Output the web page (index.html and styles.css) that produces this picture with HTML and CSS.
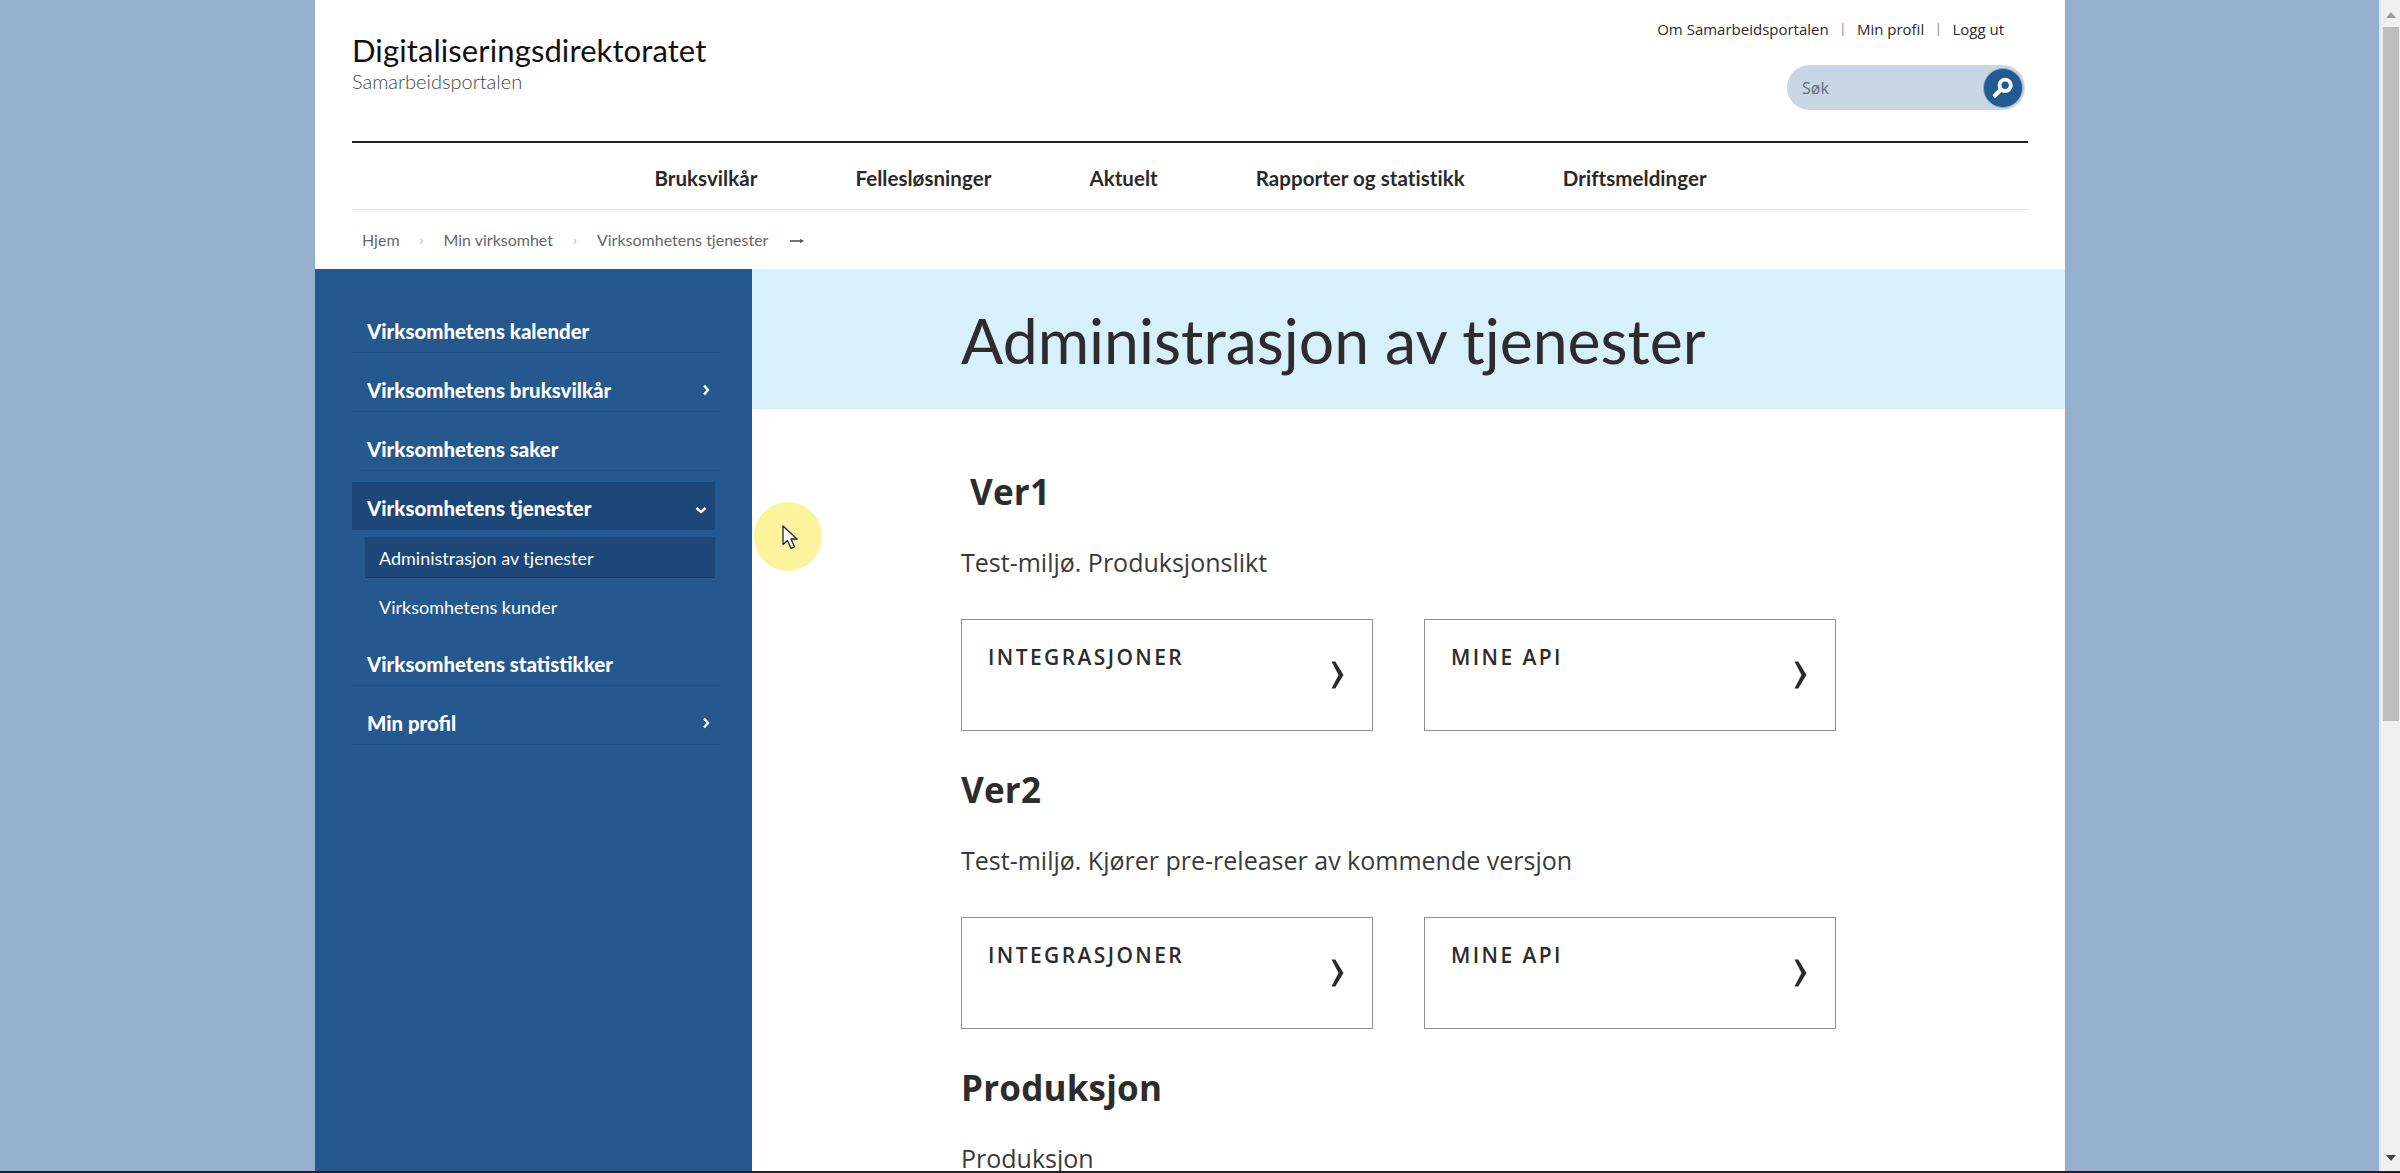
FILE: index.html
```html
<!DOCTYPE html>
<html lang="no">
<head>
<meta charset="utf-8">
<title>Administrasjon av tjenester</title>
<link rel="stylesheet" href="styles.css">
</head>
<body>
<div class="viewport">
  <div class="stage">
    <div class="page">
      <header class="header">
        <div class="header-top">
          <div class="logo">
            <div class="logo-title">Digitaliseringsdirektoratet</div>
            <div class="logo-sub">Samarbeidsportalen</div>
          </div>
          <div class="tools">
            <nav class="toplinks">
              <a>Om Samarbeidsportalen</a><span class="sep">|</span><a>Min profil</a><span class="sep">|</span><a>Logg ut</a>
            </nav>
            <div class="search">
              <span class="search-label">Søk</span>
              <span class="search-btn">
                <svg class="search-icon" viewBox="0 0 24 24"><circle cx="14" cy="9.5" r="5.2" fill="none" stroke="#fff" stroke-width="3.6"/><path d="M10 13.5 4.5 19" fill="none" stroke="#fff" stroke-width="4" stroke-linecap="round"/></svg>
              </span>
            </div>
          </div>
        </div>
        <nav class="mainnav">
          <a>Bruksvilkår</a>
          <a>Fellesløsninger</a>
          <a>Aktuelt</a>
          <a>Rapporter og statistikk</a>
          <a>Driftsmeldinger</a>
        </nav>
        <nav class="crumbs">
          <a>Hjem</a>
          <span class="crumb-sep">›</span>
          <a>Min virksomhet</a>
          <span class="crumb-sep">›</span>
          <a>Virksomhetens tjenester</a>
          <svg class="crumb-arrow" viewBox="0 0 14 6"><path d="M0 3h11" stroke="#555" stroke-width="1.6"/><path d="M10 .8 14 3l-4 2.2z" fill="#555"/></svg>
        </nav>
      </header>
      <div class="columns">
        <aside class="sidebar">
          <ul class="menu">
            <li class="menu-item"><a class="menu-link">Virksomhetens kalender</a></li>
            <li class="menu-item"><a class="menu-link">Virksomhetens bruksvilkår<svg class="chev" viewBox="0 0 8 12"><path d="M2 1.5 6 6l-4 4.5" fill="none" stroke="#fff" stroke-width="2.4"/></svg></a></li>
            <li class="menu-item"><a class="menu-link menu-link-short">Virksomhetens saker</a></li>
            <li class="menu-item"><a class="menu-link menu-link-active">Virksomhetens tjenester<svg class="chev-down" viewBox="0 0 12 8"><path d="M1.5 2 6 6l4.5-4" fill="none" stroke="#fff" stroke-width="2.4"/></svg></a>
              <ul class="submenu">
                <li><a class="sub-link sub-link-active">Administrasjon av tjenester</a></li>
                <li><a class="sub-link">Virksomhetens kunder</a></li>
              </ul>
            </li>
            <li class="menu-item"><a class="menu-link">Virksomhetens statistikker</a></li>
            <li class="menu-item"><a class="menu-link">Min profil<svg class="chev" viewBox="0 0 8 12"><path d="M2 1.5 6 6l-4 4.5" fill="none" stroke="#fff" stroke-width="2.4"/></svg></a></li>
          </ul>
        </aside>
        <main class="main">
          <div class="hero"><h1 class="hero-title">Administrasjon av tjenester</h1></div>
          <div class="content">
            <section class="env env-first">
              <h2 class="env-title env-title-indent">Ver1</h2>
              <p class="env-text">Test-miljø. Produksjonslikt</p>
              <div class="cards">
                <a class="card"><span class="card-title">INTEGRASJONER</span><svg class="card-chev" viewBox="0 0 13 28"><path d="M.5 0.5h3.800L12.500 14 4.300 27.500H.5L7.500 14z" fill="#2b2b2b"/></svg></a>
                <a class="card"><span class="card-title">MINE API</span><svg class="card-chev" viewBox="0 0 13 28"><path d="M.5 0.5h3.800L12.500 14 4.300 27.500H.5L7.500 14z" fill="#2b2b2b"/></svg></a>
              </div>
            </section>
            <section class="env">
              <h2 class="env-title">Ver2</h2>
              <p class="env-text">Test-miljø. Kjører pre-releaser av kommende versjon</p>
              <div class="cards">
                <a class="card"><span class="card-title">INTEGRASJONER</span><svg class="card-chev" viewBox="0 0 13 28"><path d="M.5 0.5h3.800L12.500 14 4.300 27.500H.5L7.500 14z" fill="#2b2b2b"/></svg></a>
                <a class="card"><span class="card-title">MINE API</span><svg class="card-chev" viewBox="0 0 13 28"><path d="M.5 0.5h3.800L12.500 14 4.300 27.500H.5L7.500 14z" fill="#2b2b2b"/></svg></a>
              </div>
            </section>
            <section class="env">
              <h2 class="env-title">Produksjon</h2>
              <p class="env-text">Produksjon</p>
            </section>
          </div>
          <div class="cursor-halo">
            <svg class="cursor" viewBox="0 0 16 25"><path d="M1 1v18.500l4.500-4 3.500 8 3.500-1.500-3.500-8h6z" fill="#fff" stroke="#222" stroke-width="1.300" stroke-linejoin="round"/></svg>
          </div>
        </main>
      </div>
    </div>
  </div>
  <div class="scrollbar">
    <span class="arrow-up"></span>
    <span class="thumb"></span>
    <span class="track"></span>
    <span class="arrow-down"></span>
  </div>
</div>
<div class="bottom-line"></div>
</body>
</html>
```
FILE: styles.css
```css
* { box-sizing: border-box; }
html, body { margin: 0; height: 100%; overflow: hidden; }
body { display: flex; flex-direction: column; background: #94b0cc; font-family: "Open Sans", sans-serif; color: #2c2c2c; }
ul { list-style: none; margin: 0; padding: 0; }
h1, h2, p { margin: 0; }

.viewport { flex: 1; min-height: 0; display: flex; }
.stage { flex: 1; min-width: 0; overflow: hidden; padding-left: 1px; }
.page { width: 1750px; height: 100%; margin: 0 auto; background: #fff; display: flex; flex-direction: column; }
.bottom-line { height: 2px; background: #222; flex: none; }

/* scrollbar */
.scrollbar { width: 21px; flex: none; background: #f0f0f0; border-left: 2px solid #dfe7f2; display: flex; flex-direction: column; align-items: center; }
.arrow-up { margin: 12px 0 9px; width: 0; height: 0; border: 5px solid transparent; border-top: 0; border-bottom: 6px solid #9c9c9c; }
.thumb { width: 16px; height: 694px; background: #bdbdbd; }
.track { flex: 1; }
.arrow-down { margin: 0 0 10px; width: 0; height: 0; border: 5px solid transparent; border-bottom: 0; border-top: 6px solid #444; }

/* header */
.header { padding: 0 37px; flex: none; }
.header-top { height: 143px; border-bottom: 2px solid #222; display: flex; justify-content: space-between; }
.logo { padding-top: 32px; font-family: Lato, sans-serif; color: #111; }
.logo-title { font-size: 31px; line-height: 36px; letter-spacing: .1px; }
.logo-sub { font-size: 20px; line-height: 22px; color: #444; margin-top: 2px; font-weight: 300; }
.tools { display: flex; flex-direction: column; align-items: flex-end; }
.toplinks { margin-top: 19px; padding-right: 24px; font-size: 15px; line-height: 20px; color: #2a2a2a; display: flex; }
.sep { color: #777; margin: 0 10.800px; font-size: 12px; }
.search { margin-top: 26px; margin-right: 3px; width: 238px; height: 45px; border-radius: 23px; background: #c9d6e4; display: flex; align-items: center; justify-content: space-between; padding: 0 2px 0 15px; }
.search-label { font-size: 16px; color: #5f6b78; }
.search-btn { width: 40px; height: 40px; border-radius: 50%; background: #235a91; border: 1px solid #8fb0d2; display: flex; align-items: center; justify-content: center; }
.search-icon { width: 26px; height: 26px; }

.mainnav { height: 67px; border-bottom: 1px solid #e4e4e4; display: flex; justify-content: center; align-items: center; gap: 98px; padding: 3px 19px 0 0; font-family: Lato, sans-serif; font-weight: 700; font-size: 20.500px; letter-spacing: .05px; color: #2a2a2a; }

.crumbs { height: 59px; display: flex; align-items: center; padding-left: 10px; font-family: Lato, sans-serif; font-size: 16px; color: #666; }
.crumb-sep { color: #bbb; margin: 0 20px; font-size: 14px; }
.crumb-arrow { width: 14px; height: 6px; margin-left: 22px; margin-top: 3px; }

/* columns */
.columns { flex: 1; min-height: 0; display: flex; }
.sidebar { width: 437px; flex: none; background: #24588e; padding: 25px 0 0 37px; }
.menu { width: 368px; }
.menu-item { padding-top: 11px; }
.menu-link { display: flex; justify-content: space-between; align-items: center; height: 48px; padding: 14px 10px 9px 15px; line-height: 24px; border-bottom: 1px solid #1f4f84; font-family: Lato, sans-serif; font-weight: 900; font-size: 20.400px; color: #fff; }
.menu-link-short { margin-left: 8px; padding-left: 7px; }
.menu-link-active { width: 363px; background: #1d4679; border-bottom: 0; padding-top: 13px; padding-right: 8px; }
.chev { width: 8px; height: 12px; }
.chev-down { width: 12px; height: 8px; margin-top: 4px; }
.submenu { margin: 7px 5px 0 13px; display: flex; flex-direction: column; gap: 8px; }
.sub-link { display: block; height: 41px; line-height: 43px; padding-left: 14px; font-family: Lato, sans-serif; font-size: 18px; color: #fff; }
.sub-link-active { background: #1d4679; border-bottom: 1px solid #17396a; }

/* main */
.main { flex: 1; min-width: 0; position: relative; }
.hero { height: 140px; background: #d8effc; padding: 31px 0 0 209px; }
.hero-title { font-family: Lato, sans-serif; font-weight: 400; font-size: 62.500px; line-height: 80px; color: #2c2c2c; }
.content { padding-left: 209px; }
.env { padding-top: 37px; }
.env-first { padding-top: 61px; }
.env-title { font-size: 35px; line-height: 44px; letter-spacing: .2px; font-weight: 700; color: #2c2c2c; }
.env-title-indent { padding-left: 9px; }
.env-text { margin-top: 30px; font-size: 25px; line-height: 36px; color: #3a3a3a; }
.cards { margin-top: 39px; display: flex; gap: 51px; }
.card { width: 412px; height: 112px; border: 1px solid #8f8f8f; padding: 23px 28px 0 26px; display: flex; justify-content: space-between; align-items: flex-start; }
.card-title { font-size: 21px; line-height: 28px; font-weight: 600; letter-spacing: 2.400px; color: #2c2c2c; }
.card-chev { width: 13px; height: 28px; margin-top: 18px; }

.cursor-halo { position: absolute; left: 2px; top: 233px; width: 68px; height: 69px; border-radius: 50%; background: #fbf49c; }
.cursor { position: absolute; left: 28px; top: 23px; width: 16px; height: 25px; }
```
